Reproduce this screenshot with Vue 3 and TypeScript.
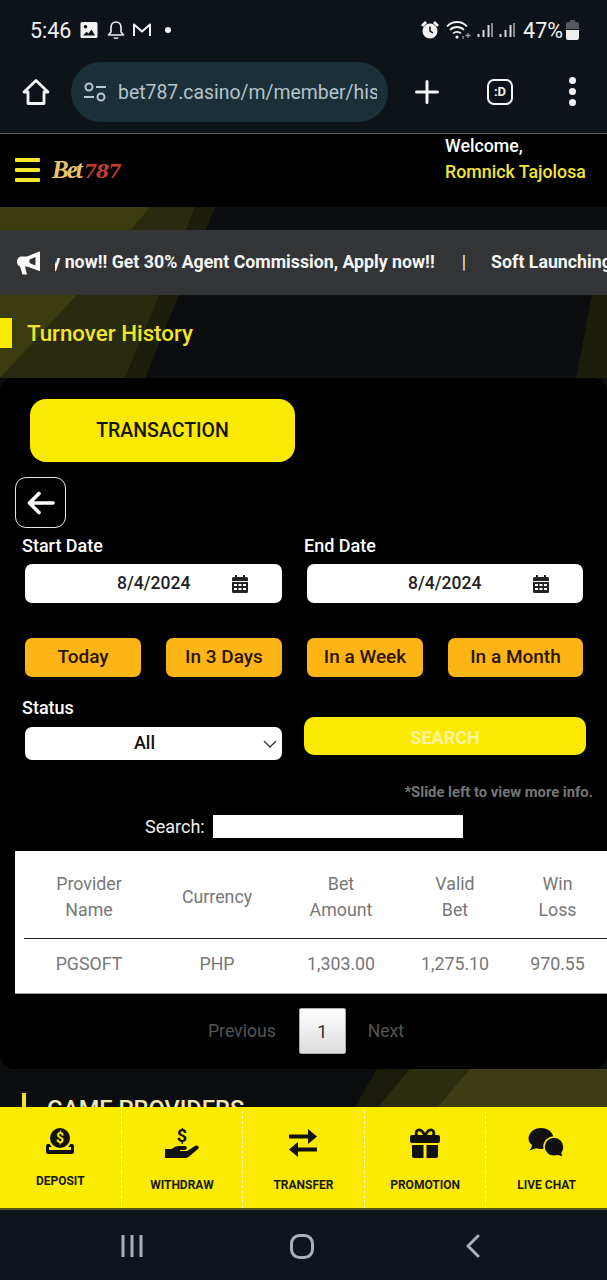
<template>
  <div class="screen">
    <div class="statusbar">
      <div class="status-left">
        <span class="clock">5:46</span>
        <svg class="ic" width="18" height="18" viewBox="0 0 18 18"><path fill="#f2f2f2" fill-rule="evenodd" d="M2 1h14a1.5 1.5 0 0 1 1.5 1.5v13A1.5 1.5 0 0 1 16 17H2a1.5 1.5 0 0 1-1.500-1.500v-13A1.500 1.500 0 0 1 2 1zm3.500 3a1.800 1.800 0 1 0 0 3.600 1.800 1.800 0 0 0 0-3.600zM3 14.500h12l-3.500-6-3 4-2-1.800z"/></svg>
        <svg class="ic ic--bell" width="18" height="20" viewBox="0 0 18 20"><path fill="none" stroke="#f2f2f2" stroke-width="1.600" stroke-linejoin="round" d="M9 2c-3 0-5 2.200-5 5.500V12l-2.500 3h15L14 12V7.500C14 4.200 12 2 9 2zM7 17.500c.5 1 3.500 1 4 0"/></svg>
        <svg class="ic" width="20" height="16" viewBox="0 0 20 16"><path fill="none" stroke="#f2f2f2" stroke-width="2" stroke-linejoin="round" d="M2 14V2.500l8 7 8-7V14"/></svg>
        <span class="dot"></span>
      </div>
      <div class="status-right">
        <svg width="20" height="20" viewBox="0 0 20 20"><circle cx="10" cy="11" r="7.500" fill="#f2f2f2"/><path fill="#f2f2f2" d="M1 5l4-4 2 2-4 4zM19 5l-4-4-2 2 4 4z"/><path fill="none" stroke="#0e1219" stroke-width="1.500" d="M10 6.500V11l3 2"/></svg>
        <svg width="26" height="20" viewBox="0 0 26 20"><g fill="none" stroke="#f2f2f2" stroke-width="1.800"><path d="M1 6.500c5.500-6 14.500-6 20 0"/><path d="M4 10c3.800-4 10.200-4 14 0"/><path d="M7 13.500c2.200-2.300 5.800-2.300 8 0"/></g><circle cx="11" cy="17" r="1.600" fill="#f2f2f2"/><path stroke="#9a9ea3" stroke-width="1.300" d="M22 13v5M19.500 15.500h5M17 16v3"/></svg>
        <svg class="signal" width="18" height="18" viewBox="0 0 17 18"><path stroke="#d6d8da" stroke-width="2" d="M2 16v-3M7 16V9M12 16V4"/><path stroke="#d6d8da" stroke-width="1.200" d="M15.500 16V2"/></svg>
        <svg class="signal" width="18" height="18" viewBox="0 0 17 18"><path stroke="#d6d8da" stroke-width="2" d="M2 16v-3M7 16V9M12 16V4"/><path stroke="#d6d8da" stroke-width="1.200" d="M15.500 16V2"/></svg>
        <span class="percent">47%</span>
        <svg width="13" height="20" viewBox="0 0 13 20"><path fill="#55585c" d="M4 0h5v2h2a2 2 0 0 1 2 2v5H0V4a2 2 0 0 1 2-2h2z"/><path fill="#eeeeee" d="M0 10h13v8a2 2 0 0 1-2 2H2a2 2 0 0 1-2-2z"/></svg>
      </div>
    </div>

    <div class="browserbar">
      <svg class="home" width="28" height="28" viewBox="0 0 28 28"><path fill="none" stroke="#f4f4f4" stroke-width="2.800" stroke-linejoin="round" d="M14 2.500L2 14h4v11.500h16V14h4z"/></svg>
      <div class="urlbox">
        <svg width="24" height="20" viewBox="0 0 24 20"><g fill="none" stroke="#b9c7cd" stroke-width="2"><circle cx="6" cy="5" r="3.500"/><path d="M13 5h10M1 15h10"/><circle cx="18" cy="15" r="3.500"/></g></svg>
        <span class="url">bet787.casino/m/member/history</span>
      </div>
      <svg class="plus" width="24" height="24" viewBox="0 0 24 24"><path stroke="#f4f4f4" stroke-width="3" stroke-linecap="round" d="M12 1.500v21M1.500 12h21"/></svg>
      <div class="tabcount">:D</div>
      <div class="kebab"><i></i><i></i><i></i></div>
    </div>

    <header class="topbar">
      <div class="burger"><i></i><i></i><i></i></div>
      <div class="logo"><span class="logo-bet">Bet</span><span class="logo-num">787</span></div>
      <div class="welcome">
        <div>Welcome,</div>
        <div class="username">Romnick Tajolosa</div>
      </div>
    </header>

    <main class="page">
      <svg class="page-bg" width="607" height="900" viewBox="0 0 607 900">
        <polygon points="0,0 215,0 145,171 0,171" fill="#1d1d0b" />
        <polygon points="0,0 195,0 125,171 0,171" fill="#2a2a0e" />
        <polygon points="0,0 150,0 75,90 0,171" fill="#3b3b10" />
        <polygon points="607,80 607,171 576,171 592,88" fill="#1d1d0b" />
        <polygon points="377,862 607,862 607,900 355,900" fill="#1b1b0c" />
        <polygon points="410,862 607,862 607,900 378,900" fill="#2c2c0f" />
        <polygon points="470,862 607,862 607,900 438,900" fill="#3e3e14" />
      </svg>

      <div class="ticker">
        <svg class="horn" width="26" height="26" viewBox="0 0 26 26"><path fill="#fff" d="M23 1.500v19.500l-2-.5-11-4H8l2 8H5.500L3 16.500C1.200 16 0 14 0 11.500 0 8.500 2 6.500 4.500 6.500H10l11-4.500z"/><path fill="#333" d="M18.500 7v8.500l-6-2.500V9.500z"/></svg>
        <div class="ticker-window">
          <div class="ticker-track">
            <span>Apply now!! Get 30% Agent Commission, Apply now!!</span>
            <span class="sep">|</span>
            <span>Soft Launching</span>
          </div>
        </div>
      </div>

      <div class="section-title">
        <span class="title-bar"></span>
        <h1>Turnover History</h1>
      </div>

      <section class="card">
        <button class="tab">TRANSACTION</button>
        <button class="back">
          <svg width="28" height="24" viewBox="0 0 28 24"><path fill="none" stroke="#fff" stroke-width="3.600" stroke-linecap="round" stroke-linejoin="round" d="M26 12H3M12 2.500L2.500 12l9.500 9.500"/></svg>
        </button>

        <div class="form-row">
          <div class="field">
            <label>Start Date</label>
            <div class="date-input">
              <span>8/4/2024</span>
              <svg width="16" height="18" viewBox="0 0 16 18"><path fill="#222" fill-rule="evenodd" d="M3 0h2v2h6V0h2v2h1.500A1.500 1.500 0 0 1 16 3.500V6H0V3.500A1.500 1.500 0 0 1 1.500 2H3zM0 7h16v9.500a1.500 1.500 0 0 1-1.500 1.500h-13A1.500 1.500 0 0 1 0 16.500zm2 2v2h3V9zm4.500 0v2h3V9zM11 9v2h3V9zm-9 4v2h3v-2zm4.500 0v2h3v-2zm4.500 0v2h3v-2z"/></svg>
            </div>
          </div>
          <div class="field">
            <label>End Date</label>
            <div class="date-input date-input--end">
              <span>8/4/2024</span>
              <svg width="16" height="18" viewBox="0 0 16 18"><path fill="#222" fill-rule="evenodd" d="M3 0h2v2h6V0h2v2h1.500A1.500 1.500 0 0 1 16 3.500V6H0V3.500A1.500 1.500 0 0 1 1.500 2H3zM0 7h16v9.500a1.500 1.500 0 0 1-1.500 1.500h-13A1.500 1.500 0 0 1 0 16.500zm2 2v2h3V9zm4.500 0v2h3V9zM11 9v2h3V9zm-9 4v2h3v-2zm4.500 0v2h3v-2zm4.500 0v2h3v-2z"/></svg>
            </div>
          </div>
        </div>

        <div class="quick">
          <button v-for="q in quickRanges" :key="q">{{ q }}</button>
        </div>

        <div class="form-row form-row--status">
          <div class="field">
            <label>Status</label>
            <div class="select">
              <span>All</span>
              <svg width="14" height="8" viewBox="0 0 14 8"><path fill="none" stroke="#333" stroke-width="1.300" d="M1 1l6 6 6-6"/></svg>
            </div>
          </div>
          <button class="search-btn">SEARCH</button>
        </div>

        <p class="hint">*Slide left to view more info.</p>

        <div class="table-search">
          <label>Search:</label>
          <input type="text" />
        </div>

        <div class="table-wrap">
          <table>
            <thead>
              <tr>
                <th v-for="h in headers" :key="h[0]" :style="{ width: h[1] + 'px' }" v-html="h[0]"></th>
              </tr>
            </thead>
            <tbody>
              <tr v-for="row in rows" :key="row[0]">
                <td v-for="cell in row" :key="cell">{{ cell }}</td>
              </tr>
            </tbody>
          </table>
        </div>

        <div class="pager">
          <span>Previous</span>
          <button>1</button>
          <span>Next</span>
        </div>
      </section>

      <div class="providers">
        <span class="providers-bar"></span>
        <h2>GAME PROVIDERS</h2>
      </div>
    </main>

    <nav class="actions">
      <a class="action">
        <svg width="28" height="26" viewBox="0 0 28 26">
          <rect y="16" width="28" height="10" rx="2" fill="#111" />
          <rect x="3" y="19" width="22" height="3" fill="#faeb00" />
          <circle cx="14" cy="10" r="12" fill="#faeb00" />
          <circle cx="14" cy="10" r="10" fill="#111" />
          <text x="14" y="15" text-anchor="middle" class="dollar">$</text>
        </svg>
        <span>DEPOSIT</span>
      </a>
      <a class="action">
        <svg width="34" height="30" viewBox="0 0 34 30">
          <text x="17" y="14" text-anchor="middle" class="dollar dollar--big">$</text>
          <path fill="#111" d="M0 21h7c2-2 4-3 7-3h6c2.500 0 2.500 3.500 0 4h-5v1h7l8-5c2.500-1.500 5 1 3 3l-9 7.500c-1 .700-2 1.500-3 1.500H0z" />
        </svg>
        <span>WITHDRAW</span>
      </a>
      <a class="action">
        <svg width="30" height="30" viewBox="0 0 30 30">
          <path fill="#111" d="M1 6.500h19V1l9 7.500-9 7.500v-5.500H1z" />
          <path fill="#111" d="M29 19.500H10V14l-9 7.500 9 7.500v-5.500h19z" />
        </svg>
        <span>TRANSFER</span>
      </a>
      <a class="action">
        <svg width="30" height="30" viewBox="0 0 30 30">
          <path fill="none" stroke="#111" stroke-width="2.800" d="M15 8C13 3 10 1.500 8 2S5.500 6 7 8M15 8c2-5 5-6.500 7-6s2.500 4 1 6" />
          <rect y="7" width="30" height="8" rx="2" fill="#111" />
          <path fill="#111" d="M2 17h11.500v13H4a2 2 0 0 1-2-2zM16.500 17H28v11a2 2 0 0 1-2 2h-9.500z" />
        </svg>
        <span>PROMOTION</span>
      </a>
      <a class="action">
        <svg width="38" height="30" viewBox="0 0 38 30">
          <path fill="#111" d="M13 0c7 0 12.500 4.800 12.500 10.500S20 21 13 21c-1.500 0-3-.2-4.500-.7L1 22.500c2-1.500 3-3.500 3-5.500C1.500 15 .5 13 .5 10.500.5 4.800 6 0 13 0z" />
          <path fill="#111" stroke="#faeb00" stroke-width="1.500" d="M26 9c5.500 0 10 4.300 10 10 0 2.500-.8 4.500-2 6 .2 1.500 1 3 3 4.500l-7.500-1.800c-1 .3-2.300.5-3.500.5-5.500 0-10-4.200-10-9.500S20.500 9 26 9z" />
        </svg>
        <span>LIVE CHAT</span>
      </a>
    </nav>

    <div class="softkeys">
      <svg width="22" height="24" viewBox="0 0 22 24"><path stroke="#aab0bb" stroke-width="3" d="M2 1v22M11 1v22M20 1v22"/></svg>
      <svg class="softkey-home" width="24" height="25" viewBox="0 0 24 25"><rect x="1.500" y="1.500" width="21" height="22" rx="8" fill="none" stroke="#aab0bb" stroke-width="3"/></svg>
      <svg class="softkey-back" width="15" height="24" viewBox="0 0 15 24"><path fill="none" stroke="#aab0bb" stroke-width="3" stroke-linecap="round" stroke-linejoin="round" d="M13 2L3 12l10 10"/></svg>
    </div>
  </div>
</template>

<script setup lang="ts">
const quickRanges: string[] = ['Today', 'In 3 Days', 'In a Week', 'In a Month'];

// label + column width, so the cells stay centred under the headers
const headers: [string, number][] = [
  ['Provider<br>Name', 130],
  ['Currency', 126],
  ['Bet<br>Amount', 122],
  ['Valid<br>Bet', 106],
  ['Win<br>Loss', 99],
];

const rows: string[][] = [['PGSOFT', 'PHP', '1,303.00', '1,275.10', '970.55']];
</script>

<style>
html,
body {
  background: #10151d;
}
</style>

<style scoped>
.screen {
  width: 607px;
  height: 1280px;
  overflow: hidden;
  font-family: Roboto, "Liberation Sans", sans-serif;
  background: #10151d;
}

.statusbar {
  height: 60px;
  padding: 0 28px 0 30px;
  box-sizing: border-box;
  display: flex;
  align-items: center;
  justify-content: space-between;
  background: #0e1219;
  color: #f2f2f2;
}

.status-left,
.status-right {
  display: flex;
  align-items: center;
}

.clock {
  font-size: 21.500px;
  margin-right: 9px;
}

.ic {
  margin-right: 9px;
}

.ic--bell {
  margin-right: 7px;
}

.dot {
  width: 6px;
  height: 6px;
  border-radius: 50%;
  background: #f2f2f2;
  margin-left: 4px;
}

.signal {
  margin-left: 4px;
}

.status-right svg:first-child {
  margin-right: 6px;
}

.percent {
  font-size: 21.500px;
  margin: 0 3px 0 7px;
}

.browserbar {
  height: 74px;
  box-sizing: border-box;
  padding: 2px 0 12px 22px;
  display: flex;
  align-items: center;
  background: #0e1219;
  border-bottom: 1px solid #5a5d60;
}

.urlbox {
  width: 317px;
  height: 60px;
  margin-left: 21px;
  padding: 0 11px 0 12px;
  box-sizing: border-box;
  border-radius: 30px;
  background: #1b2f38;
  display: flex;
  align-items: center;
  gap: 11px;
}

.url {
  flex: 1;
  padding-top: 2px;
  overflow: hidden;
  white-space: nowrap;
  font-size: 19.400px;
  color: #b4c4cb;
}

.plus {
  margin-left: 27px;
}

.tabcount {
  width: 26px;
  height: 26px;
  margin-left: 48px;
  box-sizing: border-box;
  border: 2.500px solid #f4f4f4;
  border-radius: 7px;
  color: #f4f4f4;
  font-size: 13px;
  font-weight: 700;
  text-align: center;
  line-height: 21px;
}

.kebab {
  margin-left: 56px;
  display: flex;
  flex-direction: column;
  gap: 4px;
}

.kebab i {
  width: 7px;
  height: 7px;
  border-radius: 50%;
  background: #f4f4f4;
}

.topbar {
  position: relative;
  height: 73px;
  background: #000;
  display: flex;
  align-items: center;
  padding-left: 15px;
}

.burger {
  width: 25px;
  display: flex;
  flex-direction: column;
  gap: 6px;
  margin-bottom: 2px;
}

.burger i {
  height: 4px;
  border-radius: 1px;
  background: #f5e62a;
}

.logo {
  margin-left: 12px;
  margin-bottom: 2px;
  width: 70px;
  white-space: nowrap;
  font-family: "Liberation Serif", serif;
  font-style: italic;
  font-weight: 700;
}

.logo-bet {
  font-size: 25px;
  letter-spacing: -2px;
  color: #e8c468;
}

.logo-num {
  margin-left: 3px;
  font-size: 19px;
  letter-spacing: -1px;
  color: #c23a30;
  font-family: "DejaVu Serif", serif;
}

.welcome {
  margin-left: 323px;
  margin-top: -23px;
  font-size: 17.800px;
  font-weight: 500;
  line-height: 26px;
  color: #fff;
  white-space: nowrap;
}

.username {
  color: #f2e53a;
}

.page {
  position: relative;
  height: 900px;
  padding-top: 23px;
  box-sizing: border-box;
  overflow: hidden;
  background: #0c0d0f;
}

.page-bg {
  position: absolute;
  top: 0;
  left: 0;
}

.ticker,
.section-title,
.card,
.providers {
  position: relative;
}

.ticker {
  height: 65px;
  background: #333436;
  display: flex;
  align-items: center;
  padding-left: 17px;
}

.horn {
  flex: none;
}

.ticker-window {
  width: 552px;
  margin-left: 12px;
  margin-top: -2px;
  overflow: hidden;
}

.ticker-track {
  display: flex;
  white-space: nowrap;
  font-size: 17.750px;
  font-weight: 700;
  color: #f5f5f5;
  transform: translateX(-40px);
}

.sep {
  font-weight: 400;
  margin: 0 25px 0 27px;
}

.section-title {
  height: 30px;
  margin-top: 23px;
  display: flex;
  align-items: center;
}

.title-bar {
  width: 12px;
  height: 30px;
  background: #fae900;
}

.section-title h1 {
  margin: 0 0 0 15px;
  font-size: 22.300px;
  font-weight: 500;
  color: #f2e62c;
}

.card {
  margin-top: 30px;
  padding: 21px 0 15px;
  background: #000;
  border-radius: 14px;
}

button {
  font-family: inherit;
  border: none;
  padding: 0;
}

.tab {
  display: block;
  width: 265px;
  height: 63px;
  margin-left: 30px;
  border-radius: 16px;
  background: #fae900;
  color: #141400;
  font-size: 19.500px;
  font-weight: 500;
}

.back {
  display: flex;
  align-items: center;
  justify-content: center;
  width: 51px;
  height: 51px;
  margin: 15px 0 0 15px;
  box-sizing: border-box;
  border: 1px solid #e8e8e8;
  border-radius: 11px;
  background: #000;
}

.form-row {
  display: grid;
  grid-template-columns: 282px 1fr;
  padding-left: 22px;
  margin-top: 8px;
}

.field label {
  display: block;
  height: 20px;
  line-height: 20px;
  font-size: 18px;
  font-weight: 500;
  color: #fff;
}

.date-input {
  width: 257px;
  height: 39px;
  margin: 8px 0 0 3px;
  padding: 0 34px 0 92px;
  box-sizing: border-box;
  border-radius: 7px;
  background: #fff;
  display: flex;
  align-items: center;
  justify-content: space-between;
  color: #222;
  font-size: 17.500px;
  font-weight: 500;
}

.date-input span {
  margin-bottom: 2px;
}

.date-input--end {
  width: 276px;
  padding-left: 101px;
}

.quick {
  display: grid;
  grid-template-columns: 116px 116px 116px 135px;
  gap: 25px;
  padding-left: 25px;
  margin-top: 35px;
}

.quick button {
  height: 39px;
  padding-bottom: 2px;
  border-radius: 7px;
  background: #fdb515;
  color: #2b1500;
  font-size: 19px;
  font-weight: 500;
}

.form-row--status {
  margin-top: 21px;
}

.select {
  position: relative;
  width: 257px;
  height: 33px;
  margin: 9px 0 0 3px;
  border-radius: 7px;
  background: #fff;
  display: flex;
  align-items: center;
  justify-content: center;
  color: #111;
  font-size: 18px;
  font-weight: 500;
  padding: 0 18px 2px 0;
  box-sizing: border-box;
}

.select svg {
  position: absolute;
  right: 5px;
  top: 13px;
}

.search-btn {
  width: 282px;
  height: 38px;
  margin-top: 19px;
  padding-top: 2px;
  border-radius: 10px;
  background: #fae900;
  color: #fdf49a;
  font-size: 18px;
  font-weight: 700;
}

.hint {
  margin: 22px 14px 0 0;
  text-align: right;
  line-height: 20px;
  font-size: 14.800px;
  font-weight: 700;
  color: #767676;
}

.table-search {
  display: flex;
  align-items: center;
  gap: 8px;
  margin-top: 13px;
  padding-left: 145px;
  color: #f0f0f0;
  font-size: 18px;
}

.table-search input {
  width: 250px;
  height: 23px;
  box-sizing: border-box;
  border: none;
  background: #fff;
}

.table-wrap {
  margin: 13px 0 0 15px;
  padding-left: 9px;
  background: #fff;
  border-bottom: 1px solid #9a9a9a;
}

table {
  width: 583px;
  border-collapse: collapse;
  table-layout: fixed;
  color: #777;
  font-size: 17.800px;
  text-align: center;
}

th {
  height: 87px;
  padding: 5px 0 0;
  box-sizing: border-box;
  font-weight: 400;
  line-height: 26px;
  border-bottom: 1px solid #222;
}

td {
  height: 55px;
  padding: 0 0 4px;
  box-sizing: border-box;
}

.pager {
  display: flex;
  align-items: center;
  margin-top: 14px;
  padding-left: 208px;
  color: #555;
  font-size: 17.600px;
}

.pager button {
  width: 47px;
  height: 46px;
  margin: 0 22px 0 23px;
  border: 1px solid #aaa;
  border-radius: 2px;
  background: linear-gradient(#fff, #dcdcdc);
  color: #333;
  font-size: 18px;
}

.providers {
  margin: 24px 0 0 22px;
  display: flex;
  align-items: flex-start;
}

.providers-bar {
  width: 4px;
  height: 30px;
  background: #f2e62c;
}

.providers h2 {
  margin: 2px 0 0 21px;
  font-size: 23.600px;
  font-weight: 500;
  color: #ece9b0;
  white-space: nowrap;
}

.actions {
  height: 103px;
  box-sizing: border-box;
  background: #faeb00;
  border-bottom: 2px solid #55551c;
  display: flex;
}

.action {
  flex: 1;
  box-sizing: border-box;
  margin-top: 4px;
  padding-top: 17px;
  display: flex;
  flex-direction: column;
  align-items: center;
  border-right: 1px dashed #fdf8b0;
  color: #1a1a10;
  font-size: 12px;
  font-weight: 700;
}

.action:last-child {
  border-right: none;
}

.action span {
  margin-top: 20px;
  line-height: 14px;
}

.dollar {
  font-family: Roboto, sans-serif;
  font-size: 14px;
  font-weight: 700;
  fill: #faeb00;
}

.dollar--big {
  font-size: 18px;
  fill: #111;
}

.softkeys {
  height: 70px;
  display: flex;
  align-items: center;
  padding: 2px 0 0 121px;
  box-sizing: border-box;
}

.softkey-home {
  margin-left: 147px;
}

.softkey-back {
  margin-left: 151px;
}
</style>
